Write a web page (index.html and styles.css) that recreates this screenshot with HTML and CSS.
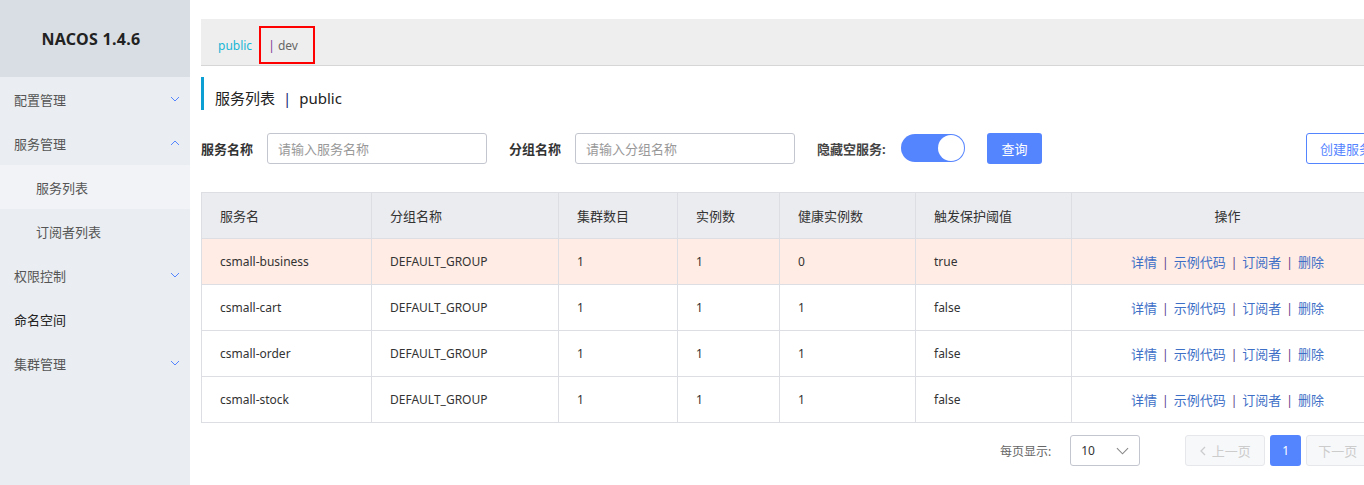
FILE: index.html
```html
<!DOCTYPE html>
<html lang="zh">
<head>
<meta charset="utf-8">
<title>Nacos</title>
<link rel="stylesheet" href="styles.css">
</head>
<body>
<aside class="sidebar">
  <div class="brand">NACOS 1.4.6</div>
  <ul class="menu">
    <li class="item"><span>配置管理</span><svg class="chev" viewBox="0 0 10 6"><path d="M1 1l4 4 4-4"/></svg></li>
    <li class="item"><span>服务管理</span><svg class="chev" viewBox="0 0 10 6"><path d="M1 5l4-4 4 4"/></svg></li>
    <li class="item sub active"><span>服务列表</span></li>
    <li class="item sub"><span>订阅者列表</span></li>
    <li class="item"><span>权限控制</span><svg class="chev" viewBox="0 0 10 6"><path d="M1 1l4 4 4-4"/></svg></li>
    <li class="item strong"><span>命名空间</span></li>
    <li class="item"><span>集群管理</span><svg class="chev" viewBox="0 0 10 6"><path d="M1 1l4 4 4-4"/></svg></li>
  </ul>
</aside>
<main class="main">
  <div class="content">
    <div class="ns-bar">
      <span class="ns-public">public</span>
      <span class="ns-dev"><span class="ns-sep">|</span> dev</span>
    </div>
    <h1 class="page-title">服务列表 <span class="title-sep">|</span> public</h1>
    <div class="search-row">
      <label class="lbl">服务名称</label>
      <div class="input">请输入服务名称</div>
      <label class="lbl lbl2">分组名称</label>
      <div class="input">请输入分组名称</div>
      <label class="lbl lbl3">隐藏空服务:</label>
      <div class="switch"><span class="knob"></span></div>
      <button class="btn-primary">查询</button>
      <span class="spacer"></span>
      <button class="btn-outline">创建服务</button>
    </div>
    <table class="grid">
      <colgroup>
        <col style="width:170px"><col style="width:187px"><col style="width:119px"><col style="width:102px"><col style="width:136px"><col style="width:156px"><col>
      </colgroup>
      <thead>
        <tr><th>服务名</th><th>分组名称</th><th>集群数目</th><th>实例数</th><th>健康实例数</th><th>触发保护阈值</th><th class="ops">操作</th></tr>
      </thead>
      <tbody>
        <tr class="warn"><td>csmall-business</td><td>DEFAULT_GROUP</td><td>1</td><td>1</td><td>0</td><td>true</td><td class="ops"><a>详情</a><i>|</i><a>示例代码</a><i>|</i><a>订阅者</a><i>|</i><a>删除</a></td></tr>
        <tr><td>csmall-cart</td><td>DEFAULT_GROUP</td><td>1</td><td>1</td><td>1</td><td>false</td><td class="ops"><a>详情</a><i>|</i><a>示例代码</a><i>|</i><a>订阅者</a><i>|</i><a>删除</a></td></tr>
        <tr><td>csmall-order</td><td>DEFAULT_GROUP</td><td>1</td><td>1</td><td>1</td><td>false</td><td class="ops"><a>详情</a><i>|</i><a>示例代码</a><i>|</i><a>订阅者</a><i>|</i><a>删除</a></td></tr>
        <tr><td>csmall-stock</td><td>DEFAULT_GROUP</td><td>1</td><td>1</td><td>1</td><td>false</td><td class="ops"><a>详情</a><i>|</i><a>示例代码</a><i>|</i><a>订阅者</a><i>|</i><a>删除</a></td></tr>
      </tbody>
    </table>
    <div class="pager">
      <span class="per">每页显示:</span>
      <div class="select"><span>10</span><svg class="sel-chev" viewBox="0 0 14 8"><path d="M1 1l6 6 6-6"/></svg></div>
      <button class="pbtn prev"><svg viewBox="0 0 6 10"><path d="M5 1L1 5l4 4"/></svg>上一页</button>
      <button class="pbtn cur">1</button>
      <button class="pbtn next">下一页</button>
    </div>
  </div>
</main>
</body>
</html>
```

FILE: styles.css
```css
* { box-sizing: border-box; }
html, body { margin: 0; padding: 0; }
body {
  display: flex;
  width: 1364px;
  height: 485px;
  overflow: hidden;
  font-family: "Noto Sans", "Noto Sans CJK SC", sans-serif;
  font-size: 12px;
  color: #333;
  background: #fff;
}
.sidebar {
  width: 190px;
  flex: none;
  background: #eaedf1;
  height: 485px;
}
.brand {
  height: 77px;
  background: #d9dee4;
  display: flex;
  align-items: center;
  justify-content: center;
  font-weight: 700;
  font-size: 16px;
  letter-spacing: 0.3px;
  color: #222;
  padding-right: 8px;
}
.menu { list-style: none; margin: 0; padding: 0; }
.item {
  height: 44px;
  display: flex;
  align-items: center;
  justify-content: space-between;
  padding: 0 10px 0 14px;
  font-size: 13px;
  color: #555;
}
.item.sub { padding-left: 36px; }
.item.active { background: #f2f3f7; }
.item.strong { color: #222; }
.chev { width: 10px; height: 6px; fill: none; stroke: #5584ff; stroke-width: 1; }
.main {
  flex: 1;
  overflow: hidden;
  padding: 19px 0 0 11px;
}
.content { width: 1183px; }
.ns-bar {
  height: 47px;
  background: #eeeeee;
  border-bottom: 1px solid #d6d6d6;
  display: flex;
  align-items: center;
  padding-left: 17px;
  font-size: 12px;
}
.ns-public { color: #18b6d6; margin-top: 6px; }
.ns-dev {
  margin-left: 7px;
  color: #666;
  height: 38px;
  width: 56px;
  border: 2px solid #f00;
  display: flex;
  align-items: center;
  padding-left: 7px;
  margin-top: 6px;
  white-space: pre;
}
.ns-sep { color: #7d3c98; }
.page-title {
  margin: 11px 0 0;
  height: 33px;
  border-left: 3px solid #0c9fd3;
  padding-left: 11px;
  font-size: 15px;
  font-weight: 400;
  color: #222;
  display: flex;
  align-items: center;
  padding-top: 8px;
}
.title-sep { color: #1a2a7a; margin: 0 8px; }
.search-row {
  margin-top: 22px;
  height: 32px;
  display: flex;
  align-items: center;
}
.lbl { font-size: 13px; font-weight: 700; color: #333; width: 66px; }
.lbl2 { margin-left: 22px; }
.lbl3 { margin-left: 22px; width: 84px; font-weight: 700; color: #444; }
.input {
  width: 220px;
  height: 31px;
  border: 1px solid #c4c6cf;
  border-radius: 3px;
  padding-left: 10px;
  display: flex;
  align-items: center;
  color: #999;
  font-size: 13px;
}
.switch {
  width: 64px;
  height: 28px;
  border-radius: 14px;
  background: #5584ff;
  position: relative;
}
.knob {
  position: absolute;
  right: 1px;
  top: 1px;
  width: 26px;
  height: 26px;
  border-radius: 50%;
  background: #fff;
}
.btn-primary {
  margin-left: 22px;
  width: 55px;
  height: 31px;
  border: 0;
  border-radius: 3px;
  background: #5584ff;
  color: #fff;
  font-family: inherit;
  font-size: 13px;
}
.spacer { flex: 1; }
.btn-outline {
  width: 80px;
  height: 31px;
  margin-right: -2px;
  border: 1px solid #5584ff;
  border-radius: 3px;
  background: #fff;
  color: #5584ff;
  font-family: inherit;
  font-size: 13px;
  text-align: left;
  padding-left: 13px;
  white-space: nowrap;
}
.grid {
  margin-top: 28px;
  width: 1183px;
  border-collapse: collapse;
  table-layout: fixed;
  font-size: 12px;
}
.grid th, .grid td {
  border: 1px solid #dcdee3;
  height: 46px;
  text-align: left;
  padding: 0 0 0 18px;
}
.grid th { background: #ebecf0; font-weight: 400; color: #333; font-size: 13px; }
.grid td { color: #333; }
.grid .ops { text-align: center; padding-left: 0; padding-right: 0; }
.grid tr.warn td { background: #ffece4; }
.ops a { color: #3e6fc7; font-size: 13px; }
.ops i { font-style: normal; color: #5a3a8a; margin: 0 5px; }
.pager {
  margin-top: 12px;
  display: flex;
  align-items: center;
  padding-left: 799px;
  white-space: nowrap;
}
.pager > * { flex: none; }
.per { color: #666; font-size: 12px; }
.select {
  margin-left: 19px;
  width: 70px;
  height: 31px;
  border: 1px solid #c4c6cf;
  border-radius: 3px;
  display: flex;
  align-items: center;
  justify-content: space-between;
  padding: 0 10px 0 10px;
  font-size: 12px;
  color: #333;
}
.sel-chev { width: 13px; height: 8px; fill: none; stroke: #888; stroke-width: 1.2; }
.pbtn {
  height: 31px;
  border-radius: 3px;
  font-family: inherit;
  font-size: 13px;
  display: flex;
  align-items: center;
  justify-content: center;
}
.prev, .next {
  width: 80px;
  background: #f7f8fa;
  border: 1px solid #e6e7eb;
  color: #ccc;
}
.prev { margin-left: 45px; }
.prev svg { width: 6px; height: 10px; fill: none; stroke: #ccc; stroke-width: 1.3; margin-right: 6px; }
.cur {
  width: 31px;
  margin-left: 5px;
  background: #5584ff;
  border: 0;
  color: #fff;
  font-size: 12px;
}
.next { margin-left: 5px; justify-content: flex-start; padding-left: 11px; }
```
